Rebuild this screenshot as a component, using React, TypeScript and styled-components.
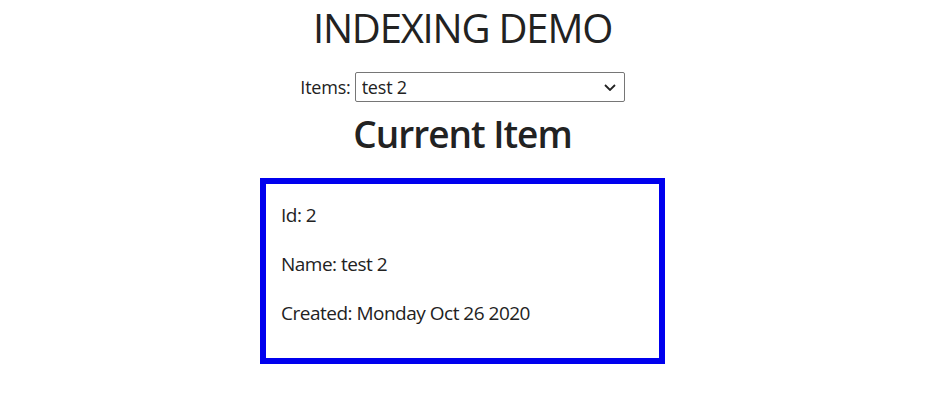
import React, { useState } from "react";
import styled, { createGlobalStyle } from "styled-components";

const GlobalStyle = createGlobalStyle`
  html, body {
    margin: 0;
    padding: 0;
    background: #ffffff;
  }
  body {
    font-family: "Open Sans", "Noto Sans", sans-serif;
    color: #222222;
  }
`;

const Page = styled.div`
  width: 925px;
  display: flex;
  flex-direction: column;
  align-items: center;
`;

const Title = styled.h1`
  margin: 0;
  padding-top: 4px;
  font-size: 40px;
  font-weight: 400;
  line-height: 48px;
  letter-spacing: -1.2px;
`;

const PickerRow = styled.div`
  display: flex;
  align-items: center;
  gap: 4px;
  margin-top: 20px;
  font-size: 18px;
`;

const Label = styled.label`
  font-size: 18px;
  letter-spacing: -0.2px;
`;

const SelectWrap = styled.div`
  position: relative;
  width: 270px;
  height: 30px;
`;

const Select = styled.select`
  appearance: none;
  width: 100%;
  height: 100%;
  box-sizing: border-box;
  border: 1px solid #767676;
  border-radius: 2px;
  background: #ffffff;
  padding: 0 28px 0 6px;
  font-family: inherit;
  font-size: 18px;
  letter-spacing: -0.2px;
  color: #222222;
  outline: none;
`;

const Chevron = styled.svg`
  position: absolute;
  right: 9px;
  top: 12px;
  pointer-events: none;
`;

const Heading = styled.h2`
  margin: 8px 0 0;
  font-size: 37px;
  font-weight: 600;
  line-height: 48px;
  letter-spacing: -1px;
`;

const ItemCard = styled.div`
  box-sizing: border-box;
  width: 405px;
  height: 186px;
  margin-top: 20px;
  border: 6px solid #0000ee;
  padding: 17px 15px;
  text-align: left;
`;

const Field = styled.p`
  margin: 0 0 21px;
  font-size: 19px;
  line-height: 28px;
  letter-spacing: -0.5px;
`;

interface Item {
  id: number;
  name: string;
  created: string;
}

const items: Item[] = [
  { id: 1, name: "test 1", created: "Sunday Oct 25 2020" },
  { id: 2, name: "test 2", created: "Monday Oct 26 2020" },
  { id: 3, name: "test 3", created: "Tuesday Oct 27 2020" },
];

const App: React.FC = () => {
  const [selectedId, setSelectedId] = useState(2);
  const current = items.find((i) => i.id === selectedId) || items[0];

  return (
    <Page>
      <GlobalStyle />
      <Title>INDEXING DEMO</Title>
      <PickerRow>
        <Label htmlFor="items">Items:</Label>
        <SelectWrap>
          <Select
            id="items"
            value={selectedId}
            onChange={(e) => setSelectedId(Number(e.target.value))}
          >
            {items.map((item) => (
              <option key={item.id} value={item.id}>
                {item.name}
              </option>
            ))}
          </Select>
          <Chevron width="12" height="7" viewBox="0 0 12 7">
            <path
              d="M1 1l5 5 5-5"
              fill="none"
              stroke="#222222"
              strokeWidth="1.8"
            />
          </Chevron>
        </SelectWrap>
      </PickerRow>
      <Heading>Current Item</Heading>
      <ItemCard>
        <Field>Id: {current.id}</Field>
        <Field>Name: {current.name}</Field>
        <Field>Created: {current.created}</Field>
      </ItemCard>
    </Page>
  );
};

export default App;
